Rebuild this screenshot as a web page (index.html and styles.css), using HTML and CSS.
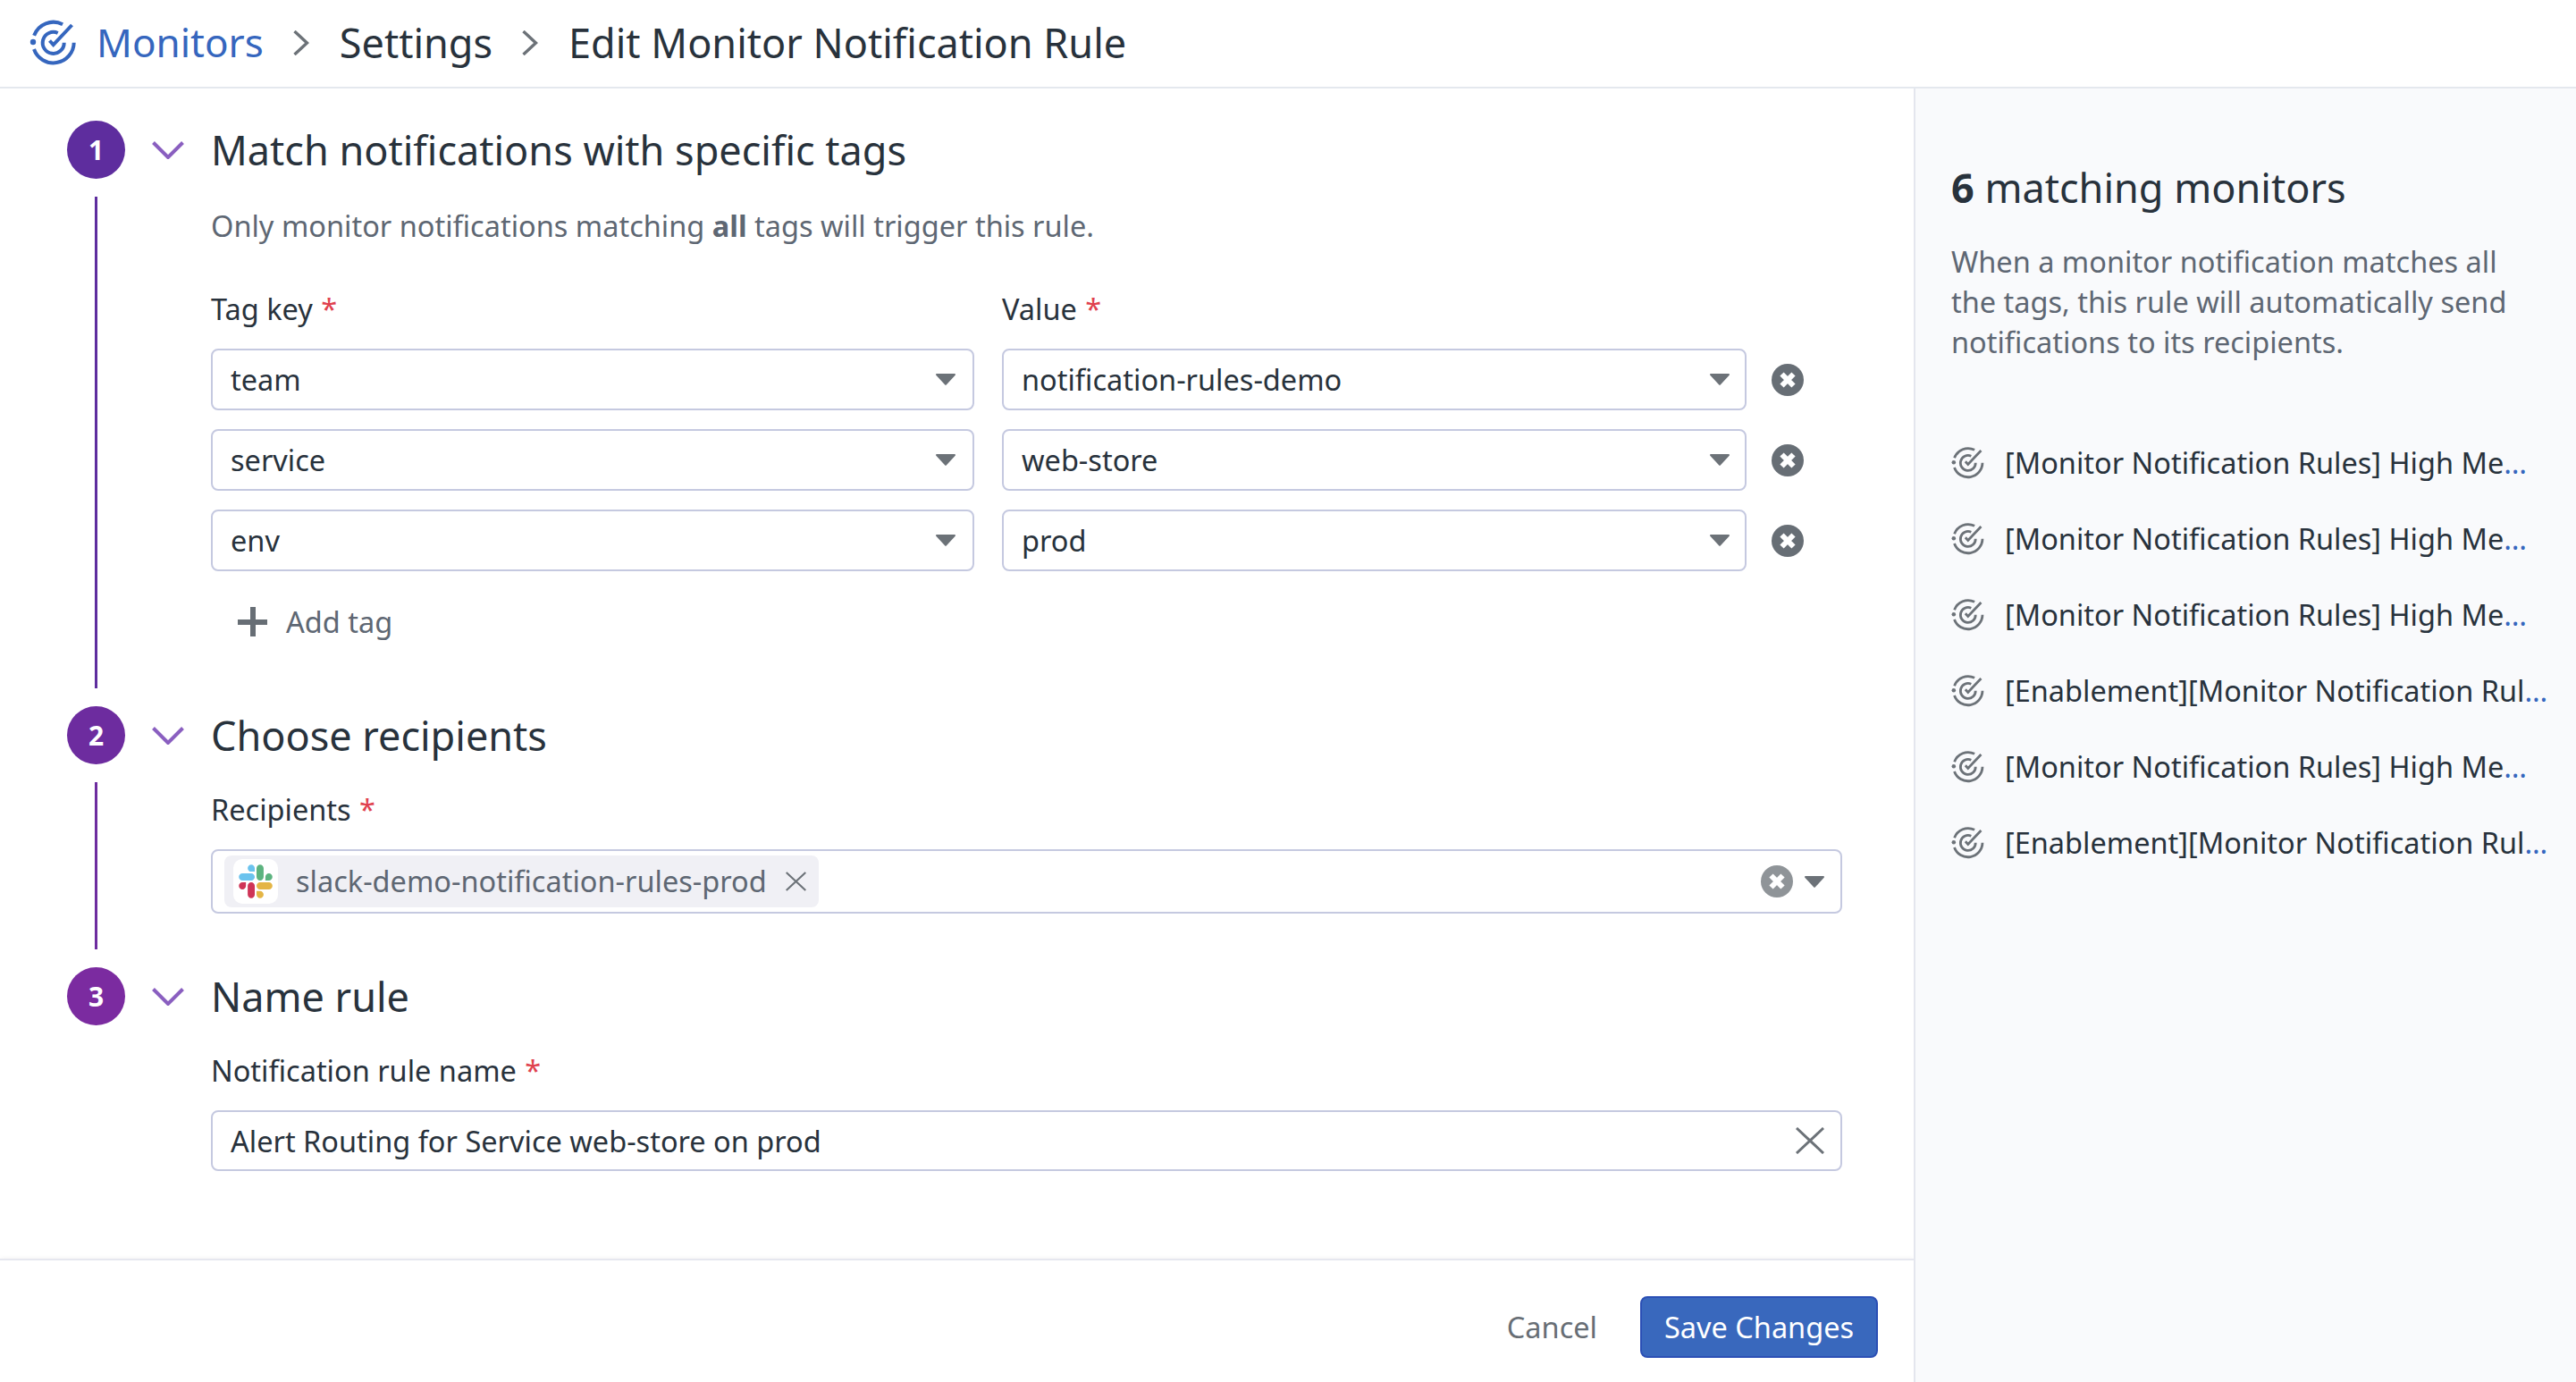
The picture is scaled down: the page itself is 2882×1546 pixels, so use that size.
FILE: index.html
```html
<!DOCTYPE html>
<html lang="en">
<head>
  <meta charset="UTF-8">
  <title>Edit Monitor Notification Rule</title>
  <link rel="stylesheet" href="styles.css">
</head>
<body>

<svg class="defs" width="0" height="0">
  <symbol id="monitor" viewBox="0 0 54 54">
    <g fill="none" stroke="currentColor" stroke-width="4">
      <path d="M5.1 18.8A23 23 0 0 1 37.1 6.2"/>
      <path d="M49.7 26.7A23 23 0 0 1 5 34"/>
      <path d="M31.7 16A12 12 0 1 0 38.7 26.7"/>
      <path d="M22.5 24.5L26.7 29L47.5 7"/>
    </g>
    <circle cx="4" cy="26" r="3.2" fill="currentColor"/>
  </symbol>
  <symbol id="chev" viewBox="0 0 36 20">
    <path d="M1.5 1.5L18 18L34.5 1.5" fill="none" stroke="#8a5fc0" stroke-width="4"/>
  </symbol>
  <symbol id="caret" viewBox="0 0 22 13">
    <path d="M1 0H21A1 1 0 0 1 21.7 1.7L11.7 12.6A1 1 0 0 1 10.3 12.6L.3 1.7A1 1 0 0 1 1 0Z" fill="#6c7278"/>
  </symbol>
  <symbol id="clear" viewBox="0 0 36 36">
    <circle cx="18" cy="18" r="18" fill="currentColor"/>
    <path d="M11.5 11.5L24.5 24.5M24.5 11.5L11.5 24.5" stroke="#fff" stroke-width="6" fill="none"/>
  </symbol>
  <symbol id="cross" viewBox="0 0 32 30">
    <path d="M1 1L31 29M31 1L1 29" stroke="#6c7278" stroke-width="3" fill="none"/>
  </symbol>
  <symbol id="crumb" viewBox="0 0 18 28">
    <path d="M1.5 1L15.5 14L1.5 27" fill="none" stroke="#6c7278" stroke-width="3.4"/>
  </symbol>
</svg>

<div class="page">
  <div class="topbar">
    <svg class="crumb-logo"><use href="#monitor"/></svg>
    <a class="crumb-link">Monitors</a>
    <svg class="crumb-sep"><use href="#crumb"/></svg>
    <span class="crumb">Settings</span>
    <svg class="crumb-sep"><use href="#crumb"/></svg>
    <span class="crumb">Edit Monitor Notification Rule</span>
  </div>

  <div class="content">
    <div class="main">
      <div class="form">

        <div class="step step-one">
          <div class="rail">
            <div class="num num-one">1</div>
            <div class="line line-one"></div>
          </div>
          <div class="chev-cell"><svg class="chev"><use href="#chev"/></svg></div>
          <div class="body">
            <h2>Match notifications with specific tags</h2>
            <p class="desc">Only monitor notifications matching <b>all</b> tags will trigger this rule.</p>
            <div class="tag-labels">
              <div class="label col-key">Tag key <span class="req">*</span></div>
              <div class="label col-val">Value <span class="req">*</span></div>
            </div>
            <div class="tag-rows">
              <div class="tag-row">
                <div class="select col-key">team<svg class="caret"><use href="#caret"/></svg></div>
                <div class="select col-val">notification-rules-demo<svg class="caret"><use href="#caret"/></svg></div>
                <svg class="clear"><use href="#clear"/></svg>
              </div>
              <div class="tag-row">
                <div class="select col-key">service<svg class="caret"><use href="#caret"/></svg></div>
                <div class="select col-val">web-store<svg class="caret"><use href="#caret"/></svg></div>
                <svg class="clear"><use href="#clear"/></svg>
              </div>
              <div class="tag-row">
                <div class="select col-key">env<svg class="caret"><use href="#caret"/></svg></div>
                <div class="select col-val">prod<svg class="caret"><use href="#caret"/></svg></div>
                <svg class="clear"><use href="#clear"/></svg>
              </div>
            </div>
            <div class="add-tag"><span class="plus"></span>Add tag</div>
          </div>
        </div>

        <div class="step step-two">
          <div class="rail">
            <div class="num num-two">2</div>
            <div class="line line-two"></div>
          </div>
          <div class="chev-cell"><svg class="chev"><use href="#chev"/></svg></div>
          <div class="body">
            <h2>Choose recipients</h2>
            <div class="label label-first">Recipients <span class="req">*</span></div>
            <div class="multi">
              <div class="chip">
                <span class="chip-icon">
                  <svg class="slack" viewBox="0 0 127 127">
                    <path fill="#cf3457" d="M27.2 80c0 7.3-5.9 13.2-13.2 13.2C6.7 93.2.8 87.3.8 80c0-7.3 5.9-13.2 13.2-13.2h13.2V80zm6.6 0c0-7.3 5.9-13.2 13.2-13.2 7.3 0 13.2 5.9 13.2 13.2v33c0 7.3-5.9 13.2-13.2 13.2-7.3 0-13.2-5.9-13.2-13.2V80z"/>
                    <path fill="#6bc3ee" d="M47 27c-7.3 0-13.2-5.9-13.2-13.2C33.8 6.5 39.7.6 47 .6c7.3 0 13.2 5.9 13.2 13.2V27H47zm0 6.7c7.3 0 13.2 5.9 13.2 13.2 0 7.3-5.9 13.2-13.2 13.2H13.9C6.6 60.1.7 54.2.7 46.9c0-7.3 5.9-13.2 13.2-13.2H47z"/>
                    <path fill="#5cb37f" d="M99.9 46.9c0-7.3 5.9-13.2 13.2-13.2 7.3 0 13.2 5.9 13.2 13.2 0 7.3-5.9 13.2-13.2 13.2H99.9V46.9zm-6.6 0c0 7.3-5.9 13.2-13.2 13.2-7.3 0-13.2-5.9-13.2-13.2V13.8C66.9 6.5 72.8.6 80.1.6c7.3 0 13.2 5.9 13.2 13.2v33.1z"/>
                    <path fill="#e4b545" d="M80.1 99.8c7.3 0 13.2 5.9 13.2 13.2 0 7.3-5.9 13.2-13.2 13.2-7.3 0-13.2-5.9-13.2-13.2V99.8h13.2zm0-6.6c-7.3 0-13.2-5.9-13.2-13.2 0-7.3 5.9-13.2 13.2-13.2h33.1c7.3 0 13.2 5.9 13.2 13.2 0 7.3-5.9 13.2-13.2 13.2H80.1z"/>
                  </svg>
                </span>
                <span class="chip-text">slack-demo-notification-rules-prod</span>
                <svg class="chip-x"><use href="#cross"/></svg>
              </div>
              <svg class="clear clear-light"><use href="#clear"/></svg>
              <svg class="caret"><use href="#caret"/></svg>
            </div>
          </div>
        </div>

        <div class="step">
          <div class="rail">
            <div class="num num-three">3</div>
          </div>
          <div class="chev-cell"><svg class="chev"><use href="#chev"/></svg></div>
          <div class="body">
            <h2>Name rule</h2>
            <div class="label label-first">Notification rule name <span class="req">*</span></div>
            <div class="text-input">Alert Routing for Service web-store on prod<svg class="input-x"><use href="#cross"/></svg></div>
          </div>
        </div>

      </div>

      <div class="footer">
        <span class="cancel">Cancel</span>
        <button class="save">Save Changes</button>
      </div>
    </div>

    <div class="side">
      <h3><b>6</b> matching monitors</h3>
      <p class="side-desc">When a monitor notification matches all the tags, this rule will automatically send notifications to its recipients.</p>
      <div class="mon-list">
        <div class="mon"><svg class="mon-icon"><use href="#monitor"/></svg><span>[Monitor Notification Rules] High Me<i>…</i></span></div>
        <div class="mon"><svg class="mon-icon"><use href="#monitor"/></svg><span>[Monitor Notification Rules] High Me<i>…</i></span></div>
        <div class="mon"><svg class="mon-icon"><use href="#monitor"/></svg><span>[Monitor Notification Rules] High Me<i>…</i></span></div>
        <div class="mon"><svg class="mon-icon"><use href="#monitor"/></svg><span>[Enablement][Monitor Notification Rul<i>…</i></span></div>
        <div class="mon"><svg class="mon-icon"><use href="#monitor"/></svg><span>[Monitor Notification Rules] High Me<i>…</i></span></div>
        <div class="mon"><svg class="mon-icon"><use href="#monitor"/></svg><span>[Enablement][Monitor Notification Rul<i>…</i></span></div>
      </div>
    </div>
  </div>
</div>

</body>
</html>
```

FILE: styles.css
```css
html, body {
  margin: 0;
  padding: 0;
  background: #fff;
}
body {
  font-family: "Noto Sans", sans-serif;
  font-size: 32.5px;
  line-height: 45px;
  color: #28323c;
  overflow: hidden;
}
.defs {
  display: block;
  height: 0;
}
.page {
  height: 1546px;
  display: flex;
  flex-direction: column;
}

/* breadcrumb */
.topbar {
  height: 95px;
  flex: none;
  border-bottom: 2px solid #e4e8ee;
  display: flex;
  align-items: center;
  padding: 0 0 2px 33px;
  font-size: 45px;
}
.crumb-logo {
  width: 54px;
  height: 54px;
  color: #3566be;
  margin-right: 21px;
}
.crumb-link {
  color: #3566be;
  font-size: 44px;
}
.crumb-sep {
  width: 18px;
  height: 28px;
  margin: 0 34px 0 33px;
}

.content {
  flex: 1;
  display: flex;
  min-height: 0;
}
.main {
  width: 2141px;
  display: flex;
  flex-direction: column;
}
.form {
  flex: 1;
  padding: 36px 0 0 75px;
}

/* steps */
.step {
  display: grid;
  grid-template-columns: 65px 96px 1825px;
}
.rail {
  display: flex;
  flex-direction: column;
  align-items: center;
}
.num {
  width: 65px;
  height: 65px;
  border-radius: 50%;
  color: #fff;
  font-size: 30px;
  font-weight: 700;
  line-height: 65px;
  text-align: center;
}
.num-one { background: #5e2d9e; }
.num-two { background: #6d2c9f; }
.num-three { background: #7b2ba0; }
.line {
  flex: 1;
  width: 3px;
  margin: 20px 0;
}
.line-one { background: #5e2d9e; }
.line-two { background: #6d2c9f; }
.chev-cell {
  padding: 23px 0 0 30px;
}
.chev {
  display: block;
  width: 36px;
  height: 20px;
}
.body h2 {
  margin: 0;
  font-size: 45px;
  font-weight: 400;
  line-height: 65px;
}
.step-one .body {
  padding-bottom: 72px;
}
.step-two .body {
  padding-bottom: 60px;
}
.desc {
  margin: 30px 0 48px;
  color: #5e6773;
}
.desc b {
  font-weight: 700;
}

.tag-labels {
  display: flex;
  margin-bottom: 22px;
}
.tag-rows {
  display: flex;
  flex-direction: column;
  gap: 21px;
}
.tag-row {
  display: flex;
  align-items: center;
}
.col-key {
  width: 854px;
  margin-right: 31px;
}
.col-val {
  width: 833px;
  margin-right: 28px;
}
.select.col-key {
  padding-right: 19px;
}
.label-first {
  margin: 28px 0 22px;
}
.req {
  color: #e0414e;
  margin-left: 1px;
}

.select, .text-input {
  box-sizing: border-box;
  height: 69px;
  display: flex;
  align-items: center;
  justify-content: space-between;
  padding: 0 17px 0 20px;
  border: 2px solid #c5c9e0;
  border-radius: 8px;
  background: #fff;
}
.caret {
  width: 22px;
  height: 13px;
  flex: none;
}
.clear {
  width: 36px;
  height: 36px;
  color: #676e75;
  flex: none;
}
.clear-light {
  color: #8f9498;
  margin-right: 13px;
}

.add-tag {
  display: flex;
  align-items: center;
  margin: 34px 0 0 30px;
  color: #5e6773;
}
.plus {
  width: 33px;
  height: 33px;
  margin-right: 21px;
  background: linear-gradient(#676e75, #676e75) center / 33px 6px no-repeat,
              linear-gradient(#676e75, #676e75) center / 6px 33px no-repeat;
}

.multi {
  box-sizing: border-box;
  height: 72px;
  display: flex;
  align-items: center;
  padding: 0 18px 0 13px;
  border: 2px solid #c5c9e0;
  border-radius: 8px;
}
.chip {
  display: flex;
  align-items: center;
  height: 58px;
  padding: 0 14px 0 10px;
  margin-right: auto;
  background: #f0f0f5;
  border-radius: 8px;
}
.chip-icon {
  width: 50px;
  height: 50px;
  display: flex;
  align-items: center;
  justify-content: center;
  background: #fff;
  border-radius: 10px;
  margin-right: 20px;
}
.slack {
  width: 38px;
  height: 38px;
}
.chip-text {
  color: #5e6773;
  margin-bottom: 2px;
}
.chip-x {
  width: 23px;
  height: 22px;
  margin-left: 21px;
}

.text-input {
  height: 68px;
  margin-top: 2px;
  padding-right: 18px;
}
.input-x {
  width: 32px;
  height: 30px;
}

/* footer */
.footer {
  flex: none;
  height: 138px;
  display: flex;
  justify-content: flex-end;
  align-items: flex-start;
  padding: 40px 40px 0 0;
  box-sizing: border-box;
  border-top: 2px solid #e6e7ef;
  box-shadow: 0 -2px 4px rgba(0,0,0,0.03);
}
.cancel {
  color: #676e75;
  line-height: 69px;
  margin-right: 48px;
}
.save {
  box-sizing: border-box;
  width: 266px;
  height: 69px;
  padding: 0;
  background: #3968bd;
  border: 2px solid #2b4fb5;
  border-radius: 8px;
  color: #fff;
  font: inherit;
}

/* right panel */
.side {
  flex: 1;
  box-sizing: border-box;
  border-left: 2px solid #e4e6ee;
  background: #f9fafc;
  padding: 81px 0 0 40px;
}
.side h3 {
  margin: 0;
  font-size: 45px;
  font-weight: 400;
  line-height: 60px;
}
.side-desc {
  width: 650px;
  margin: 30px 0 70px;
  color: #5e6773;
}
.mon {
  height: 85px;
  display: flex;
  align-items: center;
  white-space: nowrap;
}
.mon-icon {
  width: 38px;
  height: 38px;
  color: #6c7278;
  margin-right: 22px;
  flex: none;
}
.mon i {
  font-style: normal;
  color: #3566be;
}
```
